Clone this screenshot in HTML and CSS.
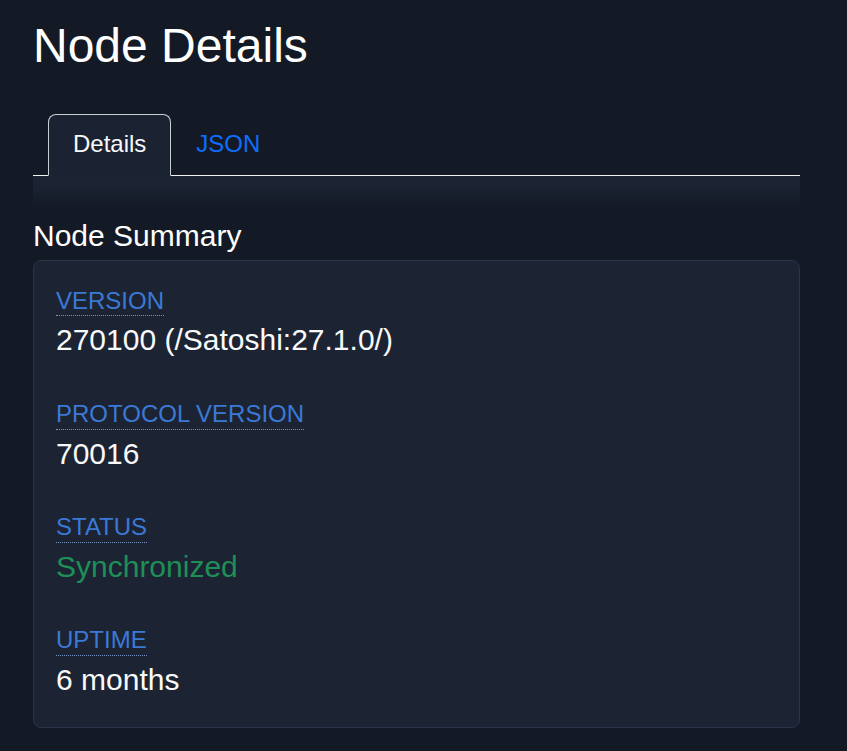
FILE: index.html
```html
<!DOCTYPE html>
<html lang="en">
<head>
<meta charset="utf-8">
<title>Node Details</title>
<link rel="stylesheet" href="styles.css">
</head>
<body>
<main class="page">
  <h1 class="title">Node Details</h1>
  <ul class="tabs">
    <li class="tab active">Details</li>
    <li class="tab">JSON</li>
  </ul>
  <div class="tab-fade"></div>
  <h2 class="section-title">Node Summary</h2>
  <dl class="card">
    <div class="item">
      <dt class="label">VERSION</dt>
      <dd class="value">270100 (/Satoshi:27.1.0/)</dd>
    </div>
    <div class="item">
      <dt class="label">PROTOCOL VERSION</dt>
      <dd class="value">70016</dd>
    </div>
    <div class="item">
      <dt class="label">STATUS</dt>
      <dd class="value success">Synchronized</dd>
    </div>
    <div class="item">
      <dt class="label">UPTIME</dt>
      <dd class="value">6 months</dd>
    </div>
  </dl>
</main>
</body>
</html>
```

FILE: styles.css
```css
html, body {
  margin: 0;
  padding: 0;
  background: #141a25;
  color: #f8f9fa;
  font-family: "Liberation Sans", Arial, sans-serif;
}

.page {
  width: 767px;
  padding: 17px 0 0 33px;
}

.title {
  margin: 0 0 39px;
  font-size: 48px;
  font-weight: 400;
  line-height: 1.2;
  color: #ffffff;
}

.tabs {
  display: flex;
  margin: 0;
  padding: 0 0 0 15px;
  list-style: none;
  border-bottom: 1px solid #f2f2f2;
}

.tab {
  padding: 11px 24px 13px;
  font-size: 24px;
  line-height: 36px;
  color: #0d6efd;
  border: 1px solid transparent;
  border-top-left-radius: 8px;
  border-top-right-radius: 8px;
  margin-bottom: -1px;
}

.tab.active {
  color: #f8f9fa;
  background: #1b2332;
  border-color: #c9ced6 #c9ced6 #1b2332;
}

.tab-fade {
  height: 30px;
  background: linear-gradient(to bottom, #1c2433 0%, #1a2130 45%, #141a25 100%);
}

.section-title {
  margin: 12px 0 6px;
  font-size: 30px;
  font-weight: 400;
  line-height: 1.2;
  color: #ffffff;
}

.card {
  margin: 0;
  padding: 26px 22px 29px;
  background: #1c2433;
  border: 1px solid #29334a;
  border-radius: 8px;
  display: flex;
  flex-direction: column;
  gap: 41.5px;
}

.item {
  display: flex;
  flex-direction: column;
  align-items: flex-start;
}

.label {
  margin: 0;
  font-size: 24px;
  line-height: 28.8px;
  color: #3b79d6;
  border-bottom: 1px dotted #7593c4;
}

.value {
  margin: 6px 0 0;
  font-size: 30px;
  line-height: 36px;
  color: #f8f9fa;
}

.value.success {
  color: #1f8f58;
}
```
